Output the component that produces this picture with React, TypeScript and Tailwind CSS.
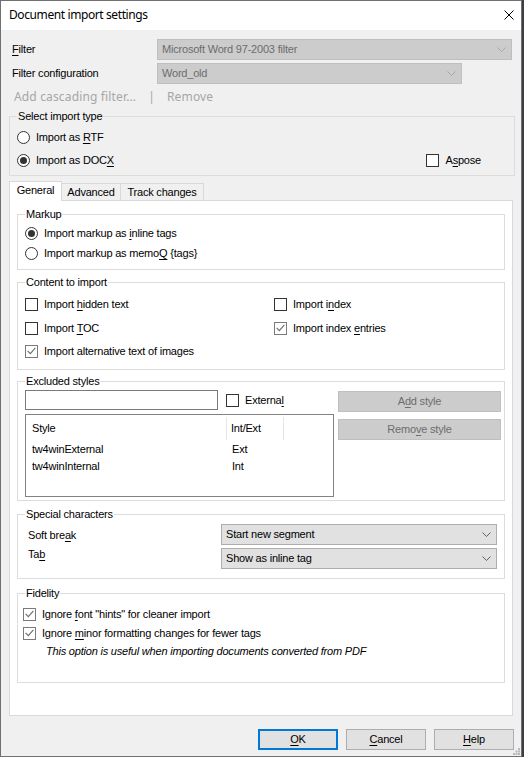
import type { ReactNode } from 'react'

// Mnemonic letter
function U({ children }: { children: ReactNode }) {
  return <span className="underline underline-offset-[2px] decoration-[1px]">{children}</span>
}

function Legend({ children, bg = 'bg-white' }: { children: ReactNode; bg?: string }) {
  return (
    <span className={`block w-fit -mt-[7px] ml-[7px] px-[1px] leading-[13px] ${bg}`}>{children}</span>
  )
}

function Check({ checked }: { checked?: boolean }) {
  return (
    <span
      className={`w-[13px] h-[13px] border bg-white shrink-0 flex items-center justify-center ${
        checked ? 'border-[#7a7a7a]' : 'border-[#333333]'
      }`}
    >
      {checked && (
        <svg width="9" height="8" viewBox="0 0 9 8">
          <path d="M0.6 3.8 L3.3 6.6 L8.4 0.9" fill="none" stroke="#6b6b6b" strokeWidth="1.1" />
        </svg>
      )}
    </span>
  )
}

function Radio({ checked }: { checked?: boolean }) {
  return (
    <span className="w-[13px] h-[13px] rounded-full border border-[#333333] bg-white shrink-0 flex items-center justify-center">
      {checked && <span className="w-[7px] h-[7px] rounded-full bg-[#333333]" />}
    </span>
  )
}

function Chevron({ color }: { color: string }) {
  return (
    <svg width="9" height="5" viewBox="0 0 9 5" className="shrink-0">
      <path d="M0.5 0.5 L4.5 4.5 L8.5 0.5" fill="none" stroke={color} strokeWidth="1" />
    </svg>
  )
}

function Combo({ text, width, disabled }: { text: string; width: string; disabled?: boolean }) {
  return (
    <div
      className={`${width} h-[21px] border flex items-center pl-[4px] pr-[5px] ${
        disabled ? 'bg-[#cccccc] border-[#bfbfbf] text-[#6d6d6d]' : 'bg-[#e1e1e1] border-[#adadad] text-black'
      }`}
    >
      <span className="flex-1 truncate">{text}</span>
      <Chevron color={disabled ? '#a8a8a8' : '#606060'} />
    </div>
  )
}

function Btn({ children, primary, width = 'w-[80px]' }: { children: ReactNode; primary?: boolean; width?: string }) {
  return (
    <div
      className={`${width} h-[21px] bg-[#e1e1e1] flex items-center justify-center ${
        primary ? 'border-2 border-[#0078d7]' : 'border border-[#adadad]'
      }`}
    >
      {children}
    </div>
  )
}

function GrayBtn({ children }: { children: ReactNode }) {
  return (
    <div className="w-[163px] h-[21px] bg-[#cccccc] border border-[#bfbfbf] text-[#6d6d6d] flex items-center justify-center">
      {children}
    </div>
  )
}

export default function App() {
  return (
    <div className="w-[524px] h-[757px] bg-[#3b3f45] font-['Liberation_Sans',Arial,sans-serif] text-[11px] tracking-[-0.2px] text-black">
      <div className="relative w-[522px] h-[757px] border border-[#707070] bg-[#f0f0f0] flex flex-col">
        {/* Title bar */}
        <div className="h-[29px] bg-white flex items-center pl-[8px] pr-[7px] shrink-0">
          <span className="flex-1 font-['Noto_Sans',sans-serif] text-[12px] tracking-[-0.4px] leading-none pb-[1px]">
            Document import settings
          </span>
          <svg width="10" height="10" viewBox="0 0 10 10" className="mb-[1px]">
            <path d="M0.5 0.5 L9.5 9.5 M9.5 0.5 L0.5 9.5" stroke="#000" strokeWidth="1" />
          </svg>
        </div>

        {/* Filter rows */}
        <div className="mt-[9px] flex items-center h-[21px]">
          <span className="ml-[11px] w-[145px]">
            <U>F</U>ilter
          </span>
          <Combo text="Microsoft Word 97-2003 filter" width="w-[355px]" disabled />
        </div>
        <div className="mt-[3px] flex items-center h-[21px]">
          <span className="ml-[11px] w-[145px]">Filter configuration</span>
          <Combo text="Word_old" width="w-[305px]" disabled />
        </div>
        <div className="mt-[5px] h-[16px] flex items-center ml-[13px] font-['Noto_Sans',sans-serif] text-[12px] tracking-[0.15px] text-[#a6a6a6]">
          <span>Add cascading filter...</span>
          <span className="ml-[12px]">|</span>
          <span className="ml-[12px]">Remove</span>
        </div>

        {/* Select import type */}
        <div className="mt-[11px] ml-[8px] w-[506px] h-[60px] border border-[#dcdcdc] shrink-0">
          <Legend bg="bg-[#f0f0f0]">Select import type</Legend>
          <div className="mt-[6px] h-[16px] flex items-center pl-[7px] gap-[6px]">
            <Radio />
            <span>
              Import as <U>R</U>TF
            </span>
          </div>
          <div className="mt-[7px] h-[16px] flex items-center pl-[7px]">
            <Radio checked />
            <span className="ml-[6px] flex-1">
              Import as DOC<U>X</U>
            </span>
            <Check />
            <span className="ml-[6px] mr-[33px]">
              A<U>s</U>pose
            </span>
          </div>
        </div>

        {/* Tabs */}
        <div className="mt-[5px] ml-[8px] h-[19px] flex items-end shrink-0">
          <div className="relative z-10 w-[53px] h-[20px] -mb-[1px] bg-white border border-b-0 border-[#d9d9d9] flex items-center justify-center pb-[2px]">
            General
          </div>
          <div className="w-[59px] h-[17px] border border-b-0 border-l-0 border-[#d9d9d9] flex items-center justify-center">
            Advanced
          </div>
          <div className="w-[83px] h-[17px] border border-b-0 border-l-0 border-[#d9d9d9] flex items-center justify-center">
            Track changes
          </div>
        </div>

        {/* Tab panel */}
        <div className="ml-[8px] w-[504px] h-[516px] bg-white border border-[#d9d9d9] shrink-0 flex flex-col">
          {/* Markup */}
          <div className="mt-[13px] ml-[7px] w-[488px] h-[56px] border border-[#dcdcdc] shrink-0">
            <Legend>Markup</Legend>
            <div className="mt-[4px] h-[16px] flex items-center pl-[7px] gap-[6px]">
              <Radio checked />
              <span>
                Import markup as <U>i</U>nline tags
              </span>
            </div>
            <div className="mt-[4px] h-[16px] flex items-center pl-[7px] gap-[6px]">
              <Radio />
              <span>
                Import markup as memo<U>Q</U> {'{tags}'}
              </span>
            </div>
          </div>

          {/* Content to import */}
          <div className="mt-[12px] ml-[7px] w-[488px] h-[88px] border border-[#dcdcdc] shrink-0">
            <Legend>Content to import</Legend>
            <div className="mt-[7px] h-[16px] flex items-center pl-[7px]">
              <div className="w-[249px] flex items-center gap-[6px]">
                <Check />
                <span>
                  Import <U>h</U>idden text
                </span>
              </div>
              <div className="flex items-center gap-[6px]">
                <Check />
                <span>
                  Import i<U>n</U>dex
                </span>
              </div>
            </div>
            <div className="mt-[8px] h-[16px] flex items-center pl-[7px]">
              <div className="w-[249px] flex items-center gap-[6px]">
                <Check />
                <span>
                  Import <U>T</U>OC
                </span>
              </div>
              <div className="flex items-center gap-[6px]">
                <Check checked />
                <span>
                  Import index <U>e</U>ntries
                </span>
              </div>
            </div>
            <div className="mt-[7px] h-[16px] flex items-center pl-[7px] gap-[6px]">
              <Check checked />
              <span>Import alternative text of images</span>
            </div>
          </div>

          {/* Excluded styles */}
          <div className="mt-[11px] ml-[7px] w-[488px] h-[120px] border border-[#dcdcdc] shrink-0">
            <Legend>Excluded styles</Legend>
            <div className="flex items-start pl-[7px]">
              <div className="w-[309px] flex flex-col">
                <div className="mt-[2px] h-[20px] flex items-center">
                  <div className="w-[193px] h-[20px] border border-[#7a7a7a] bg-white" />
                  <span className="ml-[8px]">
                    <Check />
                  </span>
                  <span className="ml-[6px]">
                    Externa<U>l</U>
                  </span>
                </div>
                <div className="mt-[4px] h-[83px] border border-[#828282] bg-white flex flex-col">
                  <div className="h-[26px] flex">
                    <div className="w-[201px] border-r border-[#e5e5e5] mt-[2px] mb-[1px] flex items-center pl-[6px]">
                      Style
                    </div>
                    <div className="w-[57px] border-r border-[#e5e5e5] mt-[2px] mb-[1px] flex items-center pl-[4px]">
                      Int/Ext
                    </div>
                  </div>
                  <div className="h-[17px] flex items-center">
                    <span className="w-[206px] pl-[6px]">tw4winExternal</span>
                    <span>Ext</span>
                  </div>
                  <div className="h-[17px] flex items-center">
                    <span className="w-[206px] pl-[6px]">tw4winInternal</span>
                    <span>Int</span>
                  </div>
                </div>
              </div>
              <div className="ml-[4px] flex flex-col">
                <div className="mt-[3px]">
                  <GrayBtn>
                    <span>
                      A<U>d</U>d style
                    </span>
                  </GrayBtn>
                </div>
                <div className="mt-[7px]">
                  <GrayBtn>
                    <span>
                      Remo<U>v</U>e style
                    </span>
                  </GrayBtn>
                </div>
              </div>
            </div>
          </div>

          {/* Special characters */}
          <div className="mt-[13px] ml-[7px] w-[488px] h-[65px] border border-[#dcdcdc] shrink-0">
            <Legend>Special characters</Legend>
            <div className="flex">
              <div className="w-[203px] pl-[10px] flex flex-col">
                <span className="mt-[8px] leading-[13px]">
                  Soft bre<U>a</U>k
                </span>
                <span className="mt-[6px] leading-[13px]">
                  Ta<U>b</U>
                </span>
              </div>
              <div className="flex flex-col">
                <div className="mt-[3px]">
                  <Combo text="Start new segment" width="w-[276px]" />
                </div>
                <div className="mt-[3px]">
                  <Combo text="Show as inline tag" width="w-[276px]" />
                </div>
              </div>
            </div>
          </div>

          {/* Fidelity */}
          <div className="mt-[14px] ml-[7px] w-[488px] h-[90px] border border-[#dcdcdc] shrink-0">
            <Legend>Fidelity</Legend>
            <div className="mt-[6px] h-[16px] flex items-center pl-[5px] gap-[6px]">
              <Check checked />
              <span>
                Ignore <U>f</U>ont "hints" for cleaner import
              </span>
            </div>
            <div className="mt-[3px] h-[16px] flex items-center pl-[5px] gap-[6px]">
              <Check checked />
              <span>
                Ignore <U>m</U>inor formatting changes for fewer tags
              </span>
            </div>
            <div className="mt-[4px] leading-[13px] pl-[28px] italic">
              This option is useful when importing documents converted from PDF
            </div>
          </div>
        </div>

        {/* Buttons */}
        <div className="mt-[13px] ml-[257px] flex gap-[8px]">
          <Btn primary>
            <span>
              <U>O</U>K
            </span>
          </Btn>
          <Btn>
            <span>
              <U>C</U>ancel
            </span>
          </Btn>
          <Btn>
            <span>
              <U>H</U>elp
            </span>
          </Btn>
        </div>

        {/* Size grip */}
        <svg width="7" height="7" viewBox="0 0 7 7" className="absolute right-[1px] bottom-[1px]">
          <rect x="5" y="0" width="2" height="2" fill="#b8b8b8" />
          <rect x="2.5" y="2.5" width="2" height="2" fill="#b8b8b8" />
          <rect x="5" y="2.5" width="2" height="2" fill="#b8b8b8" />
          <rect x="0" y="5" width="2" height="2" fill="#b8b8b8" />
          <rect x="2.5" y="5" width="2" height="2" fill="#b8b8b8" />
          <rect x="5" y="5" width="2" height="2" fill="#b8b8b8" />
        </svg>
      </div>
    </div>
  )
}
